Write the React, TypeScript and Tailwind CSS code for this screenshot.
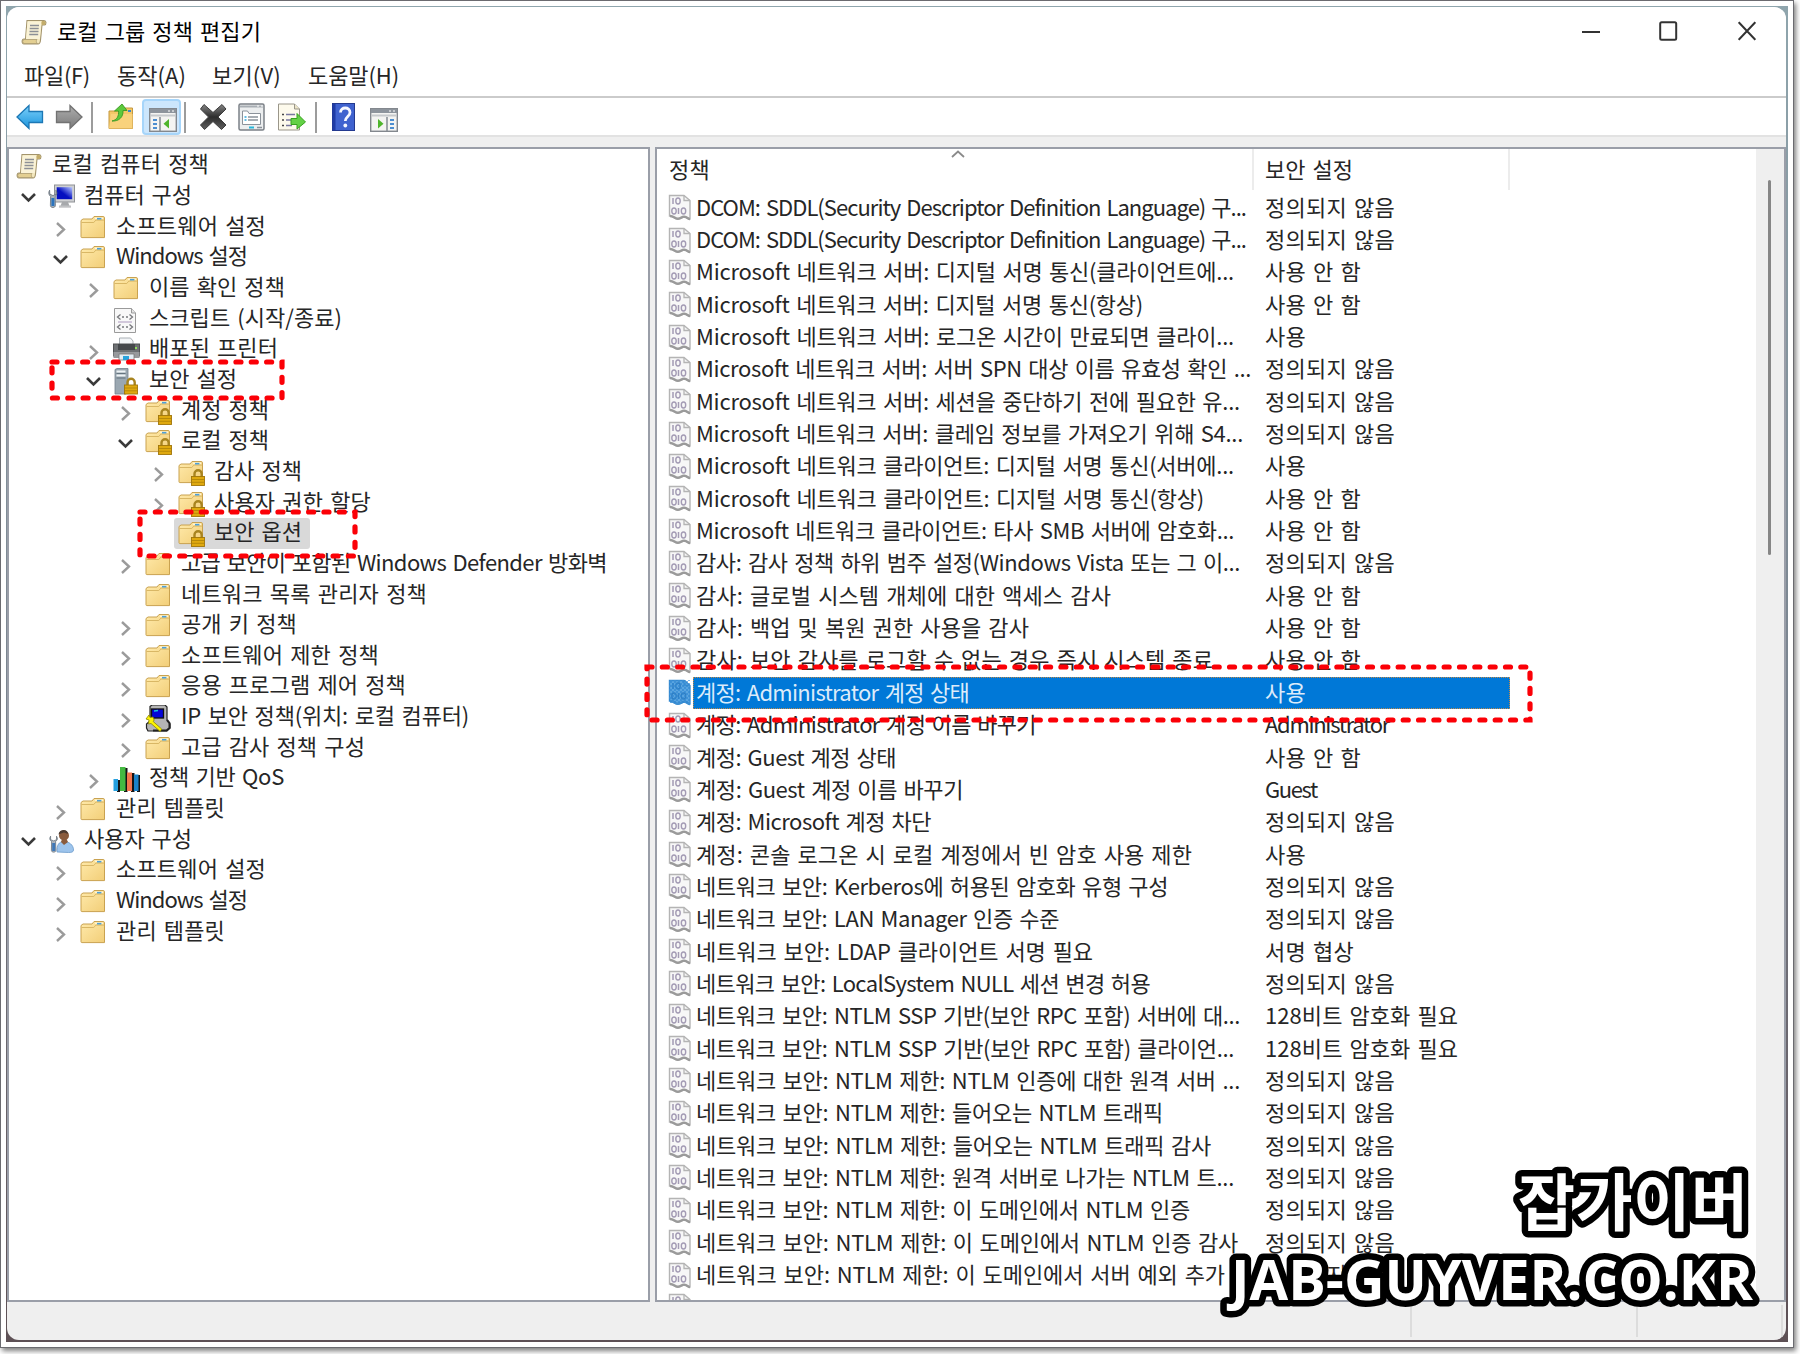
import { useLayoutEffect, useRef, useState } from "react";

/* Text whose tracking is adjusted so that it fills a given width. */
function Label({ t, w, className = "" }: { t: string; w: number; className?: string }) {
  const ref = useRef<HTMLSpanElement>(null);
  const [ls, setLs] = useState(0);
  useLayoutEffect(() => {
    if (ref.current) setLs((w - ref.current.getBoundingClientRect().width) / t.length);
  }, []);
  return (
    <span ref={ref} className={`inline-block shrink-0 whitespace-pre [word-spacing:2px] ${className}`} style={{ letterSpacing: `${ls}px` }}>
      {t}
    </span>
  );
}

type IconName = "scroll" | "computer" | "folder" | "script" | "printer" | "server" | "lockfolder" | "ip" | "qos" | "user";

function Lock() {
  return (
    <g>
      <path d="M16.5 18v-4.2a3.6 3.6 0 0 1 7.2 0V18" fill="none" stroke="#a88420" strokeWidth="2.4" />
      <rect x="13.5" y="16.5" width="13" height="9" fill="#dfa90f" stroke="#a07609" strokeWidth="0.9" />
      <path d="M14 19.5h12M14 22.3h12" stroke="#b78908" strokeWidth="1" />
    </g>
  );
}

function FolderShape() {
  return (
    <g>
      <path d="M1 5.5 3 4h9l2-2.5h9.2c.8 0 1.3.5 1.3 1.3V22.6H1.8c-.5 0-.8-.3-.8-.8z" fill="url(#fold)" stroke="#c9a250" strokeWidth="1" />
      <path d="M1.5 7.5h12.3l2-2.4h8.4" fill="none" stroke="#d9b765" strokeWidth="1" />
      <path d="M15 3.2h8" stroke="#fff6d8" strokeWidth="1.4" />
      <rect x="17" y="2.9" width="4.4" height="1.6" fill="#4d9fd8" />
    </g>
  );
}

function TreeIcon({ n }: { n: IconName }) {
  return (
    <svg viewBox="0 0 28 28" className="h-7 w-7 shrink-0">
      {n === "folder" && <FolderShape />}
      {n === "lockfolder" && (<><FolderShape /><Lock /></>)}
      {n === "scroll" && <ScrollShape />}
      {n === "computer" && (
        <g>
          <rect x="6.5" y="1" width="20" height="17" fill="#cfd0d2" stroke="#8f9296" />
          <rect x="8.7" y="3.2" width="15.5" height="12" fill="url(#scr)" />
          <path d="M14 18h6l1.5 4h-9z" fill="#a7a9ac" />
          <rect x="11" y="21.5" width="12" height="2.2" fill="#c0c1c3" />
          <path d="M1.6 6.2c-1.4 2.2-.9 5 1 6.2l-.2 9c0 2.8 5 2.8 5 0l-.3-9c2-1.2 2.4-4 .9-6.2v4l-3 1.4-3.2-1.5z" fill="#aab2ba" stroke="#66707a" strokeWidth="0.8" />
          <path d="M3.4 14h3v8h-3z" fill="#2c74bd" />
        </g>
      )}
      {n === "user" && (
        <g>
          <circle cx="16" cy="7.5" r="5" fill="#8a5b3c" />
          <path d="M10.5 6.500C11 1 20 .5 20 6l-4-1.500-3 1z" fill="#4b3a30" />
          <path d="M9 24c-.5-7 2-10.500 7-10.500S25.500 17 25.500 22c0 2-2 2.500-5 2.500z" fill="#9dc4ec" stroke="#6b9bcb" strokeWidth="0.8" />
          <path d="m13 14 3 3 4-3-1.500-3h-4.500z" fill="#8a5b3c" />
          <path d="M2.600 8.200c-1.400 2.200-.9 4 1 5.200l-.2 9c0 2.300 4.500 2.300 4.500 0l-.3-9c2-1.200 2.400-3 .9-5.200v3.500l-2.700 1.200-3.200-1.200z" fill="#b0b8c0" stroke="#6a747e" strokeWidth="0.8" />
          <path d="M4.200 15h3v8h-3z" fill="#3f78b8" />
        </g>
      )}
      {n === "script" && (
        <g>
          <path d="M1.500 1.500h17l4 4.500v19.500h-21z" fill="#f8f8f8" stroke="#9a9a9a" />
          <path d="M18.500 1.500V6h4" fill="#e3e3e3" stroke="#9a9a9a" />
          <path d="m7.500 7.500-3 2.500 3 2.500M16.500 7.500l3 2.500-3 2.500M9 10h2m2 0h2M7.500 17.500 4.500 20l3 2.500M16.500 17.500l3 2.500-3 2.500M9 20h2m2 0h2" fill="none" stroke="#77787c" strokeWidth="1.300" />
          <path d="M5 15h14" stroke="#b9a8c8" strokeWidth="1.200" />
        </g>
      )}
      {n === "printer" && (
        <g>
          <path d="M6.500 1h11l2.500 3v5H6.500z" fill="#f3f5f7" stroke="#aab0b5" />
          <rect x="0.500" y="7" width="26" height="12" fill="#6d7073" stroke="#505254" />
          <path d="M5 7h17v6H5z" fill="#45484b" />
          <path d="M.5 15h26v6h-26z" fill="#97999c" />
          <path d="M6 17h15v6H6z" fill="#e4edf4" stroke="#777" strokeWidth="0.800" />
          <rect x="10" y="19" width="6" height="4" fill="#29a3dd" />
          <rect x="22" y="10" width="2" height="2" fill="#8fe05a" />
        </g>
      )}
      {n === "server" && (
        <g>
          <path d="M2 1.500 4 .5h11v24l-2 1.500H2z" fill="#9aa7b1" stroke="#74828d" strokeWidth="0.800" />
          <path d="M3.500 3.500h9M3.500 7.500h9" stroke="#eef3f6" strokeWidth="2.200" />
          <path d="M3.500 5.500h9M3.500 10h9" stroke="#5f6e79" strokeWidth="0.900" />
          <g transform="translate(-2 .5)"><Lock /></g>
        </g>
      )}
      {n === "ip" && (
        <g>
          <path d="M5 1.500 7 0h13l2 2v13l3 4v4l-3 3H3l-1.500-3v-4L5 16z" fill="#b5b5b5" stroke="#222" strokeWidth="1.200" />
          <rect x="6.500" y="4" width="12" height="9" fill="#0505d8" stroke="#111" strokeWidth="1.300" />
          <path d="m9 6 4-.5" stroke="#19c5e0" strokeWidth="1.500" />
          <path d="M22 15l2.500 3v5l-3 2.500H8" fill="none" stroke="#222" strokeWidth="2" />
          <path d="m1 14 3-4 1 2.500 3-.5 1.200 3-1 1.500 8.500 7.500-1.500 2.500L6 18.500l-2.500.5L4 15z" fill="#fdf403" stroke="#8d8500" strokeWidth="0.800" />
        </g>
      )}
      {n === "qos" && (
        <g>
          <path d="M4 14h3v12H4zM11 2h3.500v24H11zM18 7h3.500v19H18zM24 9h3v17h-3z" fill="#141414" />
          <rect x="0.500" y="13" width="4.500" height="12" fill="#259fdf" />
          <rect x="7" y="1" width="5.500" height="24" fill="#45b942" />
          <rect x="14" y="6.500" width="5" height="18.500" fill="#f4754d" />
          <rect x="21" y="8.500" width="4.500" height="16.500" fill="#1a82c9" />
        </g>
      )}
    </svg>
  );
}

function ScrollShape() {
  return (
    <g>
      <path d="M6 1.500h17c2.500 0 2.700 4 .3 4.500H21L19.500 21c-.2 2.500-1 4-2.500 4H3c-2.500 0-2.500-5 0-5h1.500z" fill="#f3e7bd" stroke="#a3946c" strokeWidth="1.100" />
      <path d="M6.500 2.500h14L18.800 20H5z" fill="#faf3d7" />
      <path d="M3 20.500h13c-1 1-1 3 .5 4H3c-1.800-.5-1.800-3.500 0-4z" fill="#e3cf92" stroke="#a3946c" strokeWidth="0.700" />
      <path d="M9 6.500h9M8.700 9.500h9M8.500 12.500h9M8.200 15.500h9" stroke="#8d9096" strokeWidth="1.300" />
      <path d="M21 2c-1 1-.6 3.500 0 4h2.500c1.500-1 1.500-3.500 0-4z" fill="#c3ac6a" />
    </g>
  );
}

type Node = [level: number, open: 0 | 1 | 2, icon: IconName, text: string, width: number, selected?: boolean];

const nodes: Node[] = [
  [0, 0, "scroll", "로컬 컴퓨터 정책", 157],
  [1, 2, "computer", "컴퓨터 구성", 108],
  [2, 1, "folder", "소프트웨어 설정", 150],
  [2, 2, "folder", "Windows 설정", 131],
  [3, 1, "folder", "이름 확인 정책", 136],
  [3, 0, "script", "스크립트 (시작/종료)", 193],
  [3, 1, "printer", "배포된 프린터", 129],
  [3, 2, "server", "보안 설정", 88],
  [4, 1, "lockfolder", "계정 정책", 88],
  [4, 2, "lockfolder", "로컬 정책", 88],
  [5, 1, "lockfolder", "감사 정책", 88],
  [5, 1, "lockfolder", "사용자 권한 할당", 157],
  [5, 0, "lockfolder", "보안 옵션", 88, true],
  [4, 1, "folder", "고급 보안이 포함된 Windows Defender 방화벽", 426],
  [4, 0, "folder", "네트워크 목록 관리자 정책", 246],
  [4, 1, "folder", "공개 키 정책", 116],
  [4, 1, "folder", "소프트웨어 제한 정책", 198],
  [4, 1, "folder", "응용 프로그램 제어 정책", 225],
  [4, 1, "ip", "IP 보안 정책(위치: 로컬 컴퓨터)", 288],
  [4, 1, "folder", "고급 감사 정책 구성", 184],
  [3, 1, "qos", "정책 기반 QoS", 135],
  [2, 1, "folder", "관리 템플릿", 109],
  [1, 2, "user", "사용자 구성", 108],
  [2, 1, "folder", "소프트웨어 설정", 150],
  [2, 1, "folder", "Windows 설정", 131],
  [2, 1, "folder", "관리 템플릿", 109],
];

const indent = ["pl-[7px]", "pl-[11px]", "pl-[43px]", "pl-[76px]", "pl-[108px]", "pl-[141px]"];

function Tree() {
  return (
    <div className="flex flex-col pt-[1px]">
      {nodes.map(([lv, open, icon, text, w, sel], i) => (
        <div key={i} className={`flex h-[30.67px] shrink-0 items-center ${indent[lv]}`}>
          {lv > 0 && (
            <div className="mr-[11px] flex h-full w-[17px] shrink-0 items-center">
              {open === 1 && (
                <svg viewBox="0 0 17 17" className="relative top-[3px] h-[17px] w-[17px]"><path d="m5 2 7 6.500-7 6.500" fill="none" stroke="#9b9b9b" strokeWidth="2.400" /></svg>
              )}
              {open === 2 && (
                <svg viewBox="0 0 17 17" className="relative top-[1px] h-[17px] w-[17px]"><path d="m2 6 6.500 6.500L15 6" fill="none" stroke="#3a3a3a" strokeWidth="2.600" /></svg>
              )}
            </div>
          )}
          <div className={`flex h-full items-center ${sel ? "-ml-1 rounded-[3px] bg-[#d9d9d9] pl-1 pr-2" : ""}`}>
            <div className="relative top-[2px] mr-[8px]"><TreeIcon n={icon} /></div>
            <Label t={text} w={w} className="relative top-[-3px]" />
          </div>
        </div>
      ))}
    </div>
  );
}

const ND = "정의되지 않음";
const OFF = "사용 안 함";
const ON = "사용";
const rows: [string, number, string][] = [
  ["DCOM: SDDL(Security Descriptor Definition Language) 구...", 550, ND],
  ["DCOM: SDDL(Security Descriptor Definition Language) 구...", 550, ND],
  ["Microsoft 네트워크 서버: 디지털 서명 통신(클라이언트에...", 538, OFF],
  ["Microsoft 네트워크 서버: 디지털 서명 통신(항상)", 447, OFF],
  ["Microsoft 네트워크 서버: 로그온 시간이 만료되면 클라이...", 538, ON],
  ["Microsoft 네트워크 서버: 서버 SPN 대상 이름 유효성 확인 ...", 555, ND],
  ["Microsoft 네트워크 서버: 세션을 중단하기 전에 필요한 유...", 544, ND],
  ["Microsoft 네트워크 서버: 클레임 정보를 가져오기 위해 S4...", 547, ND],
  ["Microsoft 네트워크 클라이언트: 디지털 서명 통신(서버에...", 538, ON],
  ["Microsoft 네트워크 클라이언트: 디지털 서명 통신(항상)", 508, OFF],
  ["Microsoft 네트워크 클라이언트: 타사 SMB 서버에 암호화...", 538, OFF],
  ["감사: 감사 정책 하위 범주 설정(Windows Vista 또는 그 이...", 544, ND],
  ["감사: 글로벌 시스템 개체에 대한 액세스 감사", 415, OFF],
  ["감사: 백업 및 복원 권한 사용을 감사", 333, OFF],
  ["감사: 보안 감사를 로그할 수 없는 경우 즉시 시스템 종료", 517, OFF],
  ["계정: Administrator 계정 상태", 273, ON],
  ["계정: Administrator 계정 이름 바꾸기", 340, "Administrator"],
  ["계정: Guest 계정 상태", 200, OFF],
  ["계정: Guest 계정 이름 바꾸기", 267, "Guest"],
  ["계정: Microsoft 계정 차단", 235, ND],
  ["계정: 콘솔 로그온 시 로컬 계정에서 빈 암호 사용 제한", 496, ON],
  ["네트워크 보안: Kerberos에 허용된 암호화 유형 구성", 472, ND],
  ["네트워크 보안: LAN Manager 인증 수준", 363, ND],
  ["네트워크 보안: LDAP 클라이언트 서명 필요", 397, "서명 협상"],
  ["네트워크 보안: LocalSystem NULL 세션 변경 허용", 454, ND],
  ["네트워크 보안: NTLM SSP 기반(보안 RPC 포함) 서버에 대...", 544, "128비트 암호화 필요"],
  ["네트워크 보안: NTLM SSP 기반(보안 RPC 포함) 클라이언...", 538, "128비트 암호화 필요"],
  ["네트워크 보안: NTLM 제한: NTLM 인증에 대한 원격 서버 ...", 544, ND],
  ["네트워크 보안: NTLM 제한: 들어오는 NTLM 트래픽", 467, ND],
  ["네트워크 보안: NTLM 제한: 들어오는 NTLM 트래픽 감사", 515, ND],
  ["네트워크 보안: NTLM 제한: 원격 서버로 나가는 NTLM 트...", 538, ND],
  ["네트워크 보안: NTLM 제한: 이 도메인에서 NTLM 인증", 494, ND],
  ["네트워크 보안: NTLM 제한: 이 도메인에서 NTLM 인증 감사", 542, ND],
  ["네트워크 보안: NTLM 제한: 이 도메인에서 서버 예외 추가", 529, ND],
];
const valueWidth: Record<string, number> = {
  [ND]: 130, [OFF]: 96, [ON]: 41, Administrator: 124, Guest: 52, "서명 협상": 89, "128비트 암호화 필요": 193,
};

function PolicyIcon({ selected = false }: { selected?: boolean }) {
  return (
    <svg viewBox="0 0 24 27" className="h-[27px] w-6 shrink-0">
      <path d="M1.500 1.500h14.500l6 5v18.500c-2 .5-3-2.500-5.500-2-3 0-3.500 2.500-7 2-3 0-3-2.500-8-3z" fill={selected ? "#5aa5e0" : "#f7f7f7"} stroke={selected ? "#3d8fd2" : "#b4b4b4"} strokeWidth="1.400" />
      <path d="M16 1.500v5h6" fill="none" stroke={selected ? "#3d8fd2" : "#b4b4b4"} strokeWidth="1.300" />
      <path d="M5 4v6m5.500 4v6" stroke={selected ? "#2f7fc4" : "#a39bb4"} strokeWidth="1.500" />
      <ellipse cx="10" cy="7" rx="2.200" ry="3" fill="none" stroke={selected ? "#2f7fc4" : "#a39bb4"} strokeWidth="1.400" />
      <ellipse cx="6" cy="17" rx="2.200" ry="3" fill="none" stroke={selected ? "#2f7fc4" : "#a39bb4"} strokeWidth="1.400" />
      <ellipse cx="15.500" cy="17" rx="2.200" ry="3" fill="none" stroke={selected ? "#2f7fc4" : "#a39bb4"} strokeWidth="1.400" />
      <path d="M2 22c4 0 5 3 8 2.700 3 0 4-2.500 6.500-2 2.500 0 3.500 2.500 5.500 2.300" fill="none" stroke={selected ? "#3d8fd2" : "#9a9a9a"} strokeWidth="2.400" />
      {selected && <rect x="1" y="1" width="21" height="23" fill="url(#dither)" />}
    </svg>
  );
}

function PolicyList() {
  return (
    <div className="flex min-w-0 flex-1 flex-col overflow-hidden">
      <div className="relative flex h-[42.500px] shrink-0 pb-[2px] text-[22px]">
        <div className="flex w-[597px] items-center border-r-2 border-[#ececec] pl-[12px]">
          <Label t="정책" w={41} className="relative top-[-1px]" />
        </div>
        <div className="flex w-[256px] items-center border-r-2 border-[#ececec] pl-[11px]">
          <Label t="보안 설정" w={88} className="relative top-[-1px]" />
        </div>
        <svg viewBox="0 0 14 8" className="absolute left-[294px] top-[1px] h-2 w-[14px]"><path d="m1 7 6-5.500L13 7" fill="none" stroke="#8a8a8a" strokeWidth="1.800" /></svg>
      </div>
      {rows.map(([t, w, v], i) => {
        const sel = i === 15;
        return (
          <div key={i} className={`flex h-[32.350px] shrink-0 items-center pl-[11px] ${sel ? "text-[#dcebfa]" : ""}`}>
            <PolicyIcon selected={sel} />
            <div className={`ml-px flex h-[32px] w-[817px] items-center pl-[3px] ${sel ? "bg-[#0078d7] outline-1 -outline-offset-1 outline-dotted outline-[#c08a4a]" : ""}`}>
              <div className="w-[569px] shrink-0"><Label t={t} w={w} className="relative top-[-2px]" /></div>
              <Label t={v} w={valueWidth[v]} className="relative top-[-2px]" />
            </div>
          </div>
        );
      })}
      <div className="mt-[2px] shrink-0 pl-[11px]"><PolicyIcon /></div>
    </div>
  );
}

function Separator() {
  return <div className="h-[31px] w-[2px] bg-[#9c9c9c]" />;
}

function PanelIcon({ flip = false }: { flip?: boolean }) {
  return (
    <svg viewBox="0 0 28 24" className="h-6 w-7">
      <rect x="0.700" y="0.700" width="26.600" height="22.600" fill="#f4f4f2" stroke="#83888e" strokeWidth="1.400" />
      <rect x="1" y="1" width="26" height="4" fill="#8d949c" />
      <path d="M19 3h2m2 0h2" stroke="#fff" strokeWidth="1.200" />
      <path d="M2 7.500h24" stroke="#c6c9cc" strokeWidth="2" />
      <g transform={flip ? "translate(28 0) scale(-1 1)" : ""}>
        <path d="M11 9v14" stroke="#8a9097" strokeWidth="1.600" />
        <path d="M4 12h4M4 16h4M4 20h4" stroke="#4d8ed0" strokeWidth="1.800" />
        <path d="M20 11v9.500l-5.500-4.700z" fill="#4fb52c" />
      </g>
    </svg>
  );
}

function Toolbar() {
  return (
    <div className="flex h-[37px] shrink-0 items-center bg-white pl-[9px] pt-[1px]">
      <svg viewBox="0 0 28 26" className="h-[26px] w-7"><path d="M1 13 13 1.500v6h13.500v11H13v6z" fill="url(#blue)" stroke="#1c77b5" strokeWidth="1.300" /></svg>
      <svg viewBox="0 0 28 26" className="ml-[11px] h-[26px] w-7"><path d="M27 13 15 1.500v6H1.500v11H15v6z" fill="url(#gray)" stroke="#727272" strokeWidth="1.300" /></svg>
      <div className="ml-[8px]"><Separator /></div>
      <svg viewBox="0 0 26 28" className="ml-[15px] mr-[8px] h-7 w-[26px]">
        <path d="M1 8h9l2-3h12.500v20.500H1z" fill="#f4c867" stroke="#c4973f" />
        <path d="M1 25.500 3 11h21.500v14.500z" fill="#f9d27c" />
        <rect x="20" y="7" width="3" height="2" fill="#3a86c8" />
        <path d="M4 18c5-1 7-5 6.500-10H6.500L14 1l5 6.500h-4C15.500 14 11 18.500 4 18z" fill="#5cc93c" stroke="#3a9a22" strokeWidth="0.900" />
      </svg>
      <div className="flex h-9 w-[39px] items-end justify-center rounded-[4px] border-2 border-[#a6d5fa] bg-[#cce6fc] pb-px pl-[2px]"><PanelIcon /></div>
      <div className="ml-[3px]"><Separator /></div>
      <svg viewBox="0 0 28 28" className="ml-[13px] h-7 w-7"><path d="M5 1.500 14 9.500l9-8 4 4.500-8 8 8 8-4.500 4.500-8.500-8-8.500 8L1.500 22l8-8-8-8z" fill="url(#dark)" stroke="#3c3c3c" /></svg>
      <svg viewBox="0 0 27 28" className="ml-[11px] h-7 w-[27px]">
        <rect x="1" y="1" width="25" height="26" rx="1.500" fill="#eceeef" stroke="#7b8087" strokeWidth="1.500" />
        <path d="M2 3.500h23" stroke="#a7adb3" strokeWidth="2" /><path d="M19 3h2m2 0h2" stroke="#fff" />
        <path d="M4.500 8h5l1.500 2.500h11.500v11h-18z" fill="#fff" stroke="#8b929a" />
        <path d="M10 14h10M10 17h10" stroke="#8b929a" strokeWidth="1.300" /><path d="M6.500 14h2M6.500 17h2" stroke="#31a8dc" strokeWidth="1.500" />
        <path d="M11 24.500h5" stroke="#27b8dc" strokeWidth="2" /><path d="M19 24.500h5" stroke="#8b929a" strokeWidth="1.500" />
      </svg>
      <svg viewBox="0 0 29 28" className="ml-[12px] h-7 w-[29px]">
        <path d="M1.500 1h16l5 5v21h-21z" fill="#fdfaec" stroke="#9a968a" /><path d="M17.500 1v5h5" fill="#ece5c8" stroke="#9a968a" />
        <path d="M5 11.500h2M5 17h2M5 22.500h2" stroke="#444" strokeWidth="1.700" /><path d="M9 11.500h9M9 17h6M9 22.500h6" stroke="#7978a0" strokeWidth="1.500" />
        <path d="M14 15.500h6v-5l8.500 8.500-8.500 7v-4.500h-6z" fill="#63d146" stroke="#37a21e" />
      </svg>
      <div className="ml-[9px]"><Separator /></div>
      <svg viewBox="0 0 23 28" className="ml-[15px] h-7 w-[23px]">
        <rect x="0.500" y="0.500" width="22" height="27" fill="#3f62cf" stroke="#23398f" /><path d="M2 1v26" stroke="#1f3ba6" strokeWidth="3" />
        <path d="M8.500 9.500C8.500 3.500 18 3.500 18 9.500c0 4-4.700 4-4.700 8.500" fill="none" stroke="#f5f7ff" strokeWidth="2.800" /><circle cx="13.300" cy="22.500" r="1.900" fill="#f5f7ff" />
      </svg>
      <div className="ml-[15px] mt-[5px]"><PanelIcon flip /></div>
    </div>
  );
}

function DashedBox({ w, h, className }: { w: number; h: number; className: string }) {
  return (
    <svg width={w + 6} height={h + 6} className={`absolute ${className}`}>
      <rect x="3" y="3" width={w} height={h} fill="none" stroke="#fb0007" strokeWidth="5.200" strokeLinecap="round" strokeDasharray="5 10.330" />
    </svg>
  );
}

/* Outlined two-line watermark in the lower right corner. */
function Watermark() {
  return (
    <svg viewBox="0 0 560 180" className="absolute left-[1210px] top-[1150px] h-[180px] w-[560px]">
      <g fill="#fff" stroke="#000" strokeWidth="13" strokeLinejoin="round" className="font-bold [paint-order:stroke_fill]">
        <text x="308" y="76" textLength="230" lengthAdjust="spacing" className="text-[62px]">잡가이버</text>
        <text x="21" y="150" textLength="522" lengthAdjust="spacingAndGlyphs" className="font-['Open_Sans',sans-serif] text-[55px]">JAB-GUYVER.CO.KR</text>
      </g>
    </svg>
  );
}

export default function App() {
  return (
    <div className="relative h-[1354px] w-[1800px] overflow-hidden bg-white font-['Noto_Sans_CJK_KR',sans-serif] text-[22px] leading-[30px] text-[#262626]">
      <svg className="absolute h-0 w-0">
        <defs>
          <linearGradient id="fold" x1="0" y1="0" x2="1" y2="1"><stop offset="0" stopColor="#ffeaab" /><stop offset="1" stopColor="#f2ce78" /></linearGradient>
          <linearGradient id="scr" x1="0" y1="1" x2="1" y2="0"><stop offset="0.450" stopColor="#0510c0" /><stop offset="1" stopColor="#b6c6ff" /></linearGradient>
          <linearGradient id="blue" x1="0" y1="0" x2="0" y2="1"><stop offset="0" stopColor="#7cd0fa" /><stop offset="1" stopColor="#1b94dc" /></linearGradient>
          <linearGradient id="gray" x1="0" y1="0" x2="0" y2="1"><stop offset="0" stopColor="#adadad" /><stop offset="1" stopColor="#7b7b7b" /></linearGradient>
          <linearGradient id="dark" x1="0" y1="0" x2="0" y2="1"><stop offset="0" stopColor="#858585" /><stop offset="0.500" stopColor="#2d2d2d" /><stop offset="1" stopColor="#606060" /></linearGradient>
          <pattern id="dither" width="4" height="4" patternUnits="userSpaceOnUse"><rect width="2" height="2" fill="#2d86d2" opacity="0.600" /><rect x="2" y="2" width="2" height="2" fill="#2d86d2" opacity="0.600" /></pattern>
        </defs>
      </svg>

      <div className="h-[1348px] w-[1794px] border border-[#6b6b70] bg-white p-[5px] shadow-[2px_3px_5px_rgba(0,0,0,0.5)]">
        <div className="h-full w-full bg-linear-to-b from-[#8fa5ad] via-[#7b8590] to-[#5d5055] pb-[2px] pl-px pr-[2px] pt-px">
          <div className="flex h-full w-full flex-col overflow-hidden rounded-[12px] bg-[#efefef]">
            <div className="flex h-[48px] shrink-0 items-center bg-white pl-[14px]">
              <svg viewBox="0 0 27 27" className="relative top-[1px] mr-[9px] h-[27px] w-[27px]"><ScrollShape /></svg>
              <Label t="로컬 그룹 정책 편집기" w={204} className="relative top-[-1px] text-black" />
              <div className="ml-auto mr-[30px] flex items-center text-[#333]">
                <svg viewBox="0 0 18 20" className="mr-[59px] h-5 w-[18px]"><path d="M0 11h18" stroke="currentColor" strokeWidth="2" /></svg>
                <svg viewBox="0 0 19 20" className="mr-[60px] h-5 w-[19px]"><rect x="1.200" y="1.200" width="16" height="17.600" rx="1.500" fill="none" stroke="currentColor" strokeWidth="2" /></svg>
                <svg viewBox="0 0 18 20" className="h-5 w-[18px]"><path d="m.7 1.200 16.600 17.600m0-17.600L.7 18.800" stroke="currentColor" strokeWidth="2" /></svg>
              </div>
            </div>
            <div className="flex h-[41px] shrink-0 items-center bg-white pb-[4px] pl-[17px]">
              <Label t="파일(F)" w={66} className="mr-[27px]" />
              <Label t="동작(A)" w={69} className="mr-[26px]" />
              <Label t="보기(V)" w={69} className="mr-[27px]" />
              <Label t="도움말(H)" w={91} />
            </div>
            <div className="h-[2px] shrink-0 bg-[#cbcbcb]" />
            <Toolbar />
            <div className="h-[12px] shrink-0 border-t-2 border-[#e2e2e2]" />
            <div className="flex min-h-0 flex-1 gap-[5px]">
              <div className="w-[643px] shrink-0 overflow-hidden border-2 border-[#9a9ea8] bg-white"><Tree /></div>
              <div className="flex min-w-0 flex-1 overflow-hidden border-2 border-[#9a9ea8] bg-white">
                <PolicyList />
                <div className="flex w-[28px] shrink-0 justify-center bg-[#efefef] pr-[2px] pt-[31px]">
                  <div className="h-[375px] w-[3px] rounded-full bg-[#868686]" />
                </div>
              </div>
            </div>
            <div className="flex h-[38px] shrink-0 justify-end pb-[3px] pr-[3px] pt-[3px]">
              <div className="w-[226px] border-l-2 border-[#dcdcdc]" />
              <div className="w-[147px] border-x-2 border-[#dcdcdc]" />
            </div>
          </div>
        </div>
      </div>

      <DashedBox w={230} h={36} className="left-[49px] top-[359px]" />
      <DashedBox w={215} h={44} className="left-[137px] top-[509px]" />
      <DashedBox w={883} h={53} className="left-[644px] top-[664px]" />
      <Watermark />
    </div>
  );
}
